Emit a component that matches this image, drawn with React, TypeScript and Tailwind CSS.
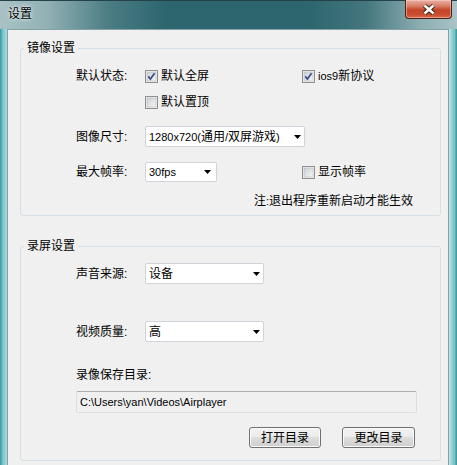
import React, { useId } from "react";

function Check({ checked, children }: { checked?: boolean; children: React.ReactNode }) {
  const id = useId().replace(/:/g, "");
  return (
    <div className="flex items-center gap-[3px]">
      <svg width="13" height="13" viewBox="0 0 13 13" className="shrink-0">
        <defs>
          <linearGradient id={`g${id}`} x1="0" y1="0" x2="1" y2="1">
            <stop offset="0" stopColor="#cbcfd5" />
            <stop offset="1" stopColor="#f7f7f7" />
          </linearGradient>
        </defs>
        <rect x="0.5" y="0.5" width="12" height="12" fill="#f4f4f4" stroke="#8e8f8f" />
        <rect x="2" y="2" width="9" height="9" fill={`url(#g${id})`} stroke="#b5b8bd" strokeWidth="0.6" />
        {checked && (
          <path d="M3.3 6.4 L5.4 9 L9.6 3.2" fill="none" stroke="#3b4f8c" strokeWidth="1.7" />
        )}
      </svg>
      <span className="leading-[16px]">{children}</span>
    </div>
  );
}

function Arrow() {
  return (
    <svg width="7" height="4" viewBox="0 0 7 4" className="shrink-0">
      <polygon points="0,0 7,0 3.5,4" fill="#000" />
    </svg>
  );
}

function L({ children }: { children: React.ReactNode }) {
  return <span className="text-[11px]">{children}</span>;
}

function Btn({ children, cls }: { children: React.ReactNode; cls: string }) {
  return (
    <div
      className={`h-[21px] flex items-center justify-center rounded-[3px] border border-[#707070] bg-[linear-gradient(to_bottom,#f2f2f2_0%,#ebebeb_50%,#dddddd_50%,#cfcfcf_100%)] shadow-[inset_0_0_0_1px_#fbfbfb] ${cls}`}
    >
      {children}
    </div>
  );
}

export default function App() {
  return (
    <div className="w-[457px] h-[465px] overflow-hidden flex flex-col text-[12px] text-black font-['Liberation_Sans','Noto_Sans_CJK_SC',sans-serif] bg-[#6fc2c6]">
      {/* Title bar */}
      <div className="h-[29px] shrink-0 flex items-start border-t border-[#23424a] bg-[linear-gradient(to_right,#a9c1c4_0%,#93b2b6_10%,#4a7c83_24%,#2e666f_36%,#2e666f_68%,#44767e_80%,#8cafb3_92%,#a9c3c6_100%)]">
        <div className="pl-[8px] pt-[5px] leading-[16px] [text-shadow:0_0_4px_#e8f2f2,0_0_2px_#e8f2f2]">设置</div>
        <div className="ml-auto mr-[5px] w-[47px] h-[19px] -mt-[1px] rounded-b-[4px] border border-t-0 border-[#4c1f17] bg-[linear-gradient(to_bottom,#eab2a4_0%,#d77a63_35%,#c4462a_55%,#c84c2f_80%,#d86b4c_100%)] shadow-[inset_0_0_0_1px_rgba(255,220,210,0.45)] flex items-center justify-center">
          <svg width="14" height="11" viewBox="0 0 14 11">
            <path d="M2.5 1.5 L11.5 9.5 M11.5 1.5 L2.5 9.5" stroke="#3a1810" strokeWidth="4.4" />
            <path d="M2.5 1.5 L11.5 9.5 M11.5 1.5 L2.5 9.5" stroke="#ffffff" strokeWidth="2.6" />
          </svg>
        </div>
      </div>

      {/* Body */}
      <div className="flex flex-1 min-h-0">
        <div className="w-[7px] shrink-0 bg-[linear-gradient(to_right,#3f8f98_0%,#5fb8bd_25%,#8ad1d2_60%,#a9dcdc_100%)]" />
        <div className="w-[442px] shrink-0 bg-[#f0f0f0] border-l border-t border-r border-[#83a1a6] flex flex-col">
          {/* Group 1 */}
          <fieldset className="mt-[10px] ml-[12px] w-[421px] border border-[#d5dfe5] rounded-[3px] p-0">
            <legend className="ml-[3px] px-[3px] leading-[16px]">镜像设置</legend>
            <div className="pl-[55px] pt-[10px] pb-[6px] flex flex-col">
              <div className="h-[20px] flex items-center">
                <div className="w-[69px]">默认状态:</div>
                <div className="w-[157px]">
                  <Check checked>默认全屏</Check>
                </div>
                <Check checked>
                  <L>ios9</L>新协议
                </Check>
              </div>
              <div className="h-[20px] mt-[6px] flex items-center">
                <div className="w-[69px]" />
                <Check>默认置顶</Check>
              </div>
              <div className="h-[21px] mt-[14px] flex items-center">
                <div className="w-[69px]">图像尺寸:</div>
                <div className="w-[160px] h-[21px] flex items-center justify-between bg-white border border-[#cfd4db] rounded-[2px] pl-[3px] pr-[3px]">
                  <span className="leading-[16px]">
                    <L>1280x720(</L>通用<L>/</L>双屏游戏<L>)</L>
                  </span>
                  <Arrow />
                </div>
              </div>
              <div className="h-[20px] mt-[15px] flex items-center">
                <div className="w-[69px]">最大帧率:</div>
                <div className="w-[157px]">
                  <div className="w-[72px] h-[20px] flex items-center justify-between bg-white border border-[#cfd4db] rounded-[2px] pl-[3px] pr-[5px]">
                    <L>30fps</L>
                    <Arrow />
                  </div>
                </div>
                <Check>显示帧率</Check>
              </div>
              <div className="h-[16px] mt-[11px] flex items-center pl-[178px] leading-[16px]">
                注<L>:</L>退出程序重新启动才能生效
              </div>
            </div>
          </fieldset>

          {/* Group 2 */}
          <fieldset className="mt-[22px] ml-[12px] w-[421px] border border-[#d5dfe5] rounded-[3px] p-0">
            <legend className="ml-[3px] px-[3px] leading-[16px]">录屏设置</legend>
            <div className="pl-[55px] pt-[9px] pb-[12px] flex flex-col">
              <div className="h-[21px] flex items-center">
                <div className="w-[69px]">声音来源:</div>
                <div className="w-[119px] h-[21px] flex items-center justify-between bg-white border border-[#cfd4db] rounded-[2px] pl-[3px] pr-[3px]">
                  <span className="leading-[16px]">设备</span>
                  <Arrow />
                </div>
              </div>
              <div className="h-[21px] mt-[37px] flex items-center">
                <div className="w-[69px]">视频质量:</div>
                <div className="w-[119px] h-[21px] flex items-center justify-between bg-white border border-[#cfd4db] rounded-[2px] pl-[3px] pr-[3px]">
                  <span className="leading-[16px]">高</span>
                  <Arrow />
                </div>
              </div>
              <div className="h-[16px] mt-[25px] flex items-center leading-[16px]">录像保存目录:</div>
              <div className="w-[341px] h-[22px] mt-[8px] flex items-center pl-[3px] border border-[#dadde2] border-t-[#abadb3] rounded-[2px] bg-[#f0f0f0]">
                <L>C:\Users\yan\Videos\Airplayer</L>
              </div>
              <div className="mt-[14px] flex items-center pl-[173px]">
                <Btn cls="w-[72px]">打开目录</Btn>
                <Btn cls="w-[73px] ml-[21px]">更改目录</Btn>
              </div>
            </div>
          </fieldset>
        </div>
        <div className="w-[8px] shrink-0 bg-[linear-gradient(to_right,#c6e6e6_0%,#98d6d6_30%,#6cc3c6_70%,#3f8f98_100%)]" />
      </div>
    </div>
  );
}
